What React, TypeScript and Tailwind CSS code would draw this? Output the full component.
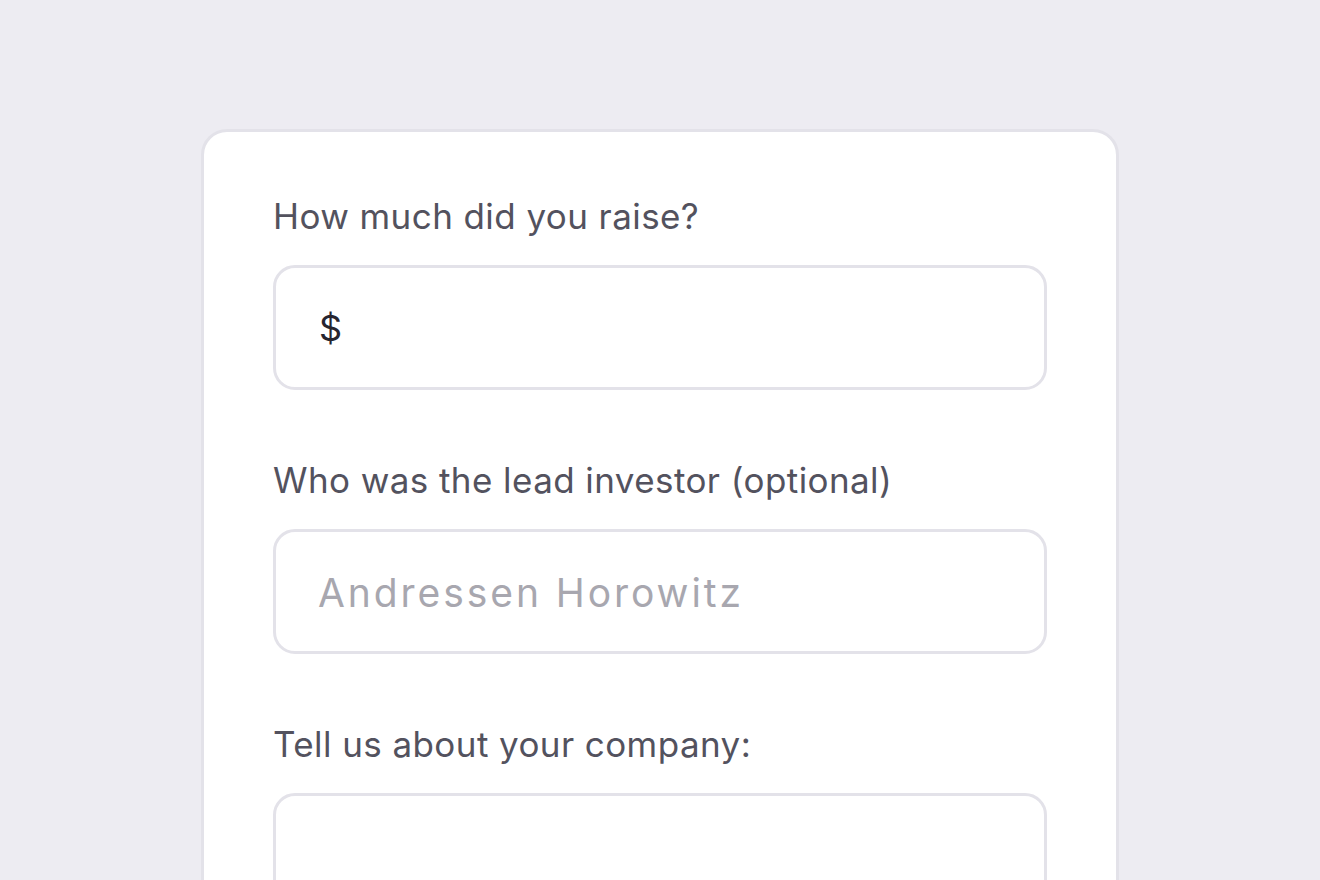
import React from "react";

const font = { fontFamily: "Inter, 'Noto Sans', sans-serif" } as const;

function Label({ children }: { children: React.ReactNode }) {
  return (
    <div className="text-[35px] leading-[40px] text-[#53525e] tracking-[0.012em]">
      {children}
    </div>
  );
}

export default function App() {
  return (
    <div
      className="w-[1320px] h-[880px] overflow-hidden bg-[#edecf2] pt-[129px] pl-[201px]"
      style={font}
    >
      <div className="w-[918px] h-[900px] bg-white border-[3px] border-[#e3e2e9] rounded-[26px] pt-[64px] px-[69px]">
        <div className="flex flex-col">
          <Label>How much did you raise?</Label>
          <div className="mt-[29px] h-[125px] border-[3px] border-[#e3e2e9] rounded-[22px] flex items-center pl-[43px] pr-[20px]">
            <span className="text-[36px] text-[#26252f]">$</span>
            <input
              className="flex-1 ml-3 outline-none bg-transparent text-[36px] text-[#26252f]"
              aria-label="Amount raised"
            />
          </div>

          <div className="mt-[70px]">
            <Label>Who was the lead investor (optional)</Label>
          </div>
          <div className="mt-[29px] h-[125px] border-[3px] border-[#e3e2e9] rounded-[22px] flex items-center pt-[4px] pl-[42px] pr-[20px]">
            <input
              className="w-full outline-none bg-transparent text-[39px] text-[#26252f] tracking-[0.075em] placeholder:text-[#a8a7af]"
              placeholder="Andressen Horowitz"
            />
          </div>

          <div className="mt-[70px]">
            <Label>Tell us about your company:</Label>
          </div>
          <div className="mt-[29px] h-[125px] border-[3px] border-[#e3e2e9] rounded-[22px]" />
        </div>
      </div>
    </div>
  );
}
